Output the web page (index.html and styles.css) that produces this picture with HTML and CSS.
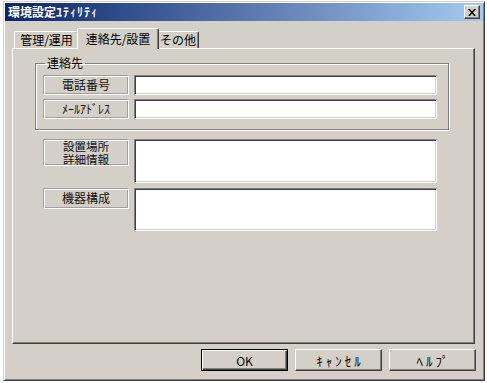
FILE: index.html
```html
<!DOCTYPE html>
<html lang="ja">
<head>
    <meta charset="UTF-8">
    <title>環境設定ﾕﾃｨﾘﾃｨ</title>
    <link rel="stylesheet" href="styles.css">
</head>
<body>
    <div class="window">
        <div class="titlebar">
            <span class="title">環境設定<span class="kana">ﾕﾃｨﾘﾃｨ</span></span>
            <span class="close">
                <svg width="8" height="7" viewBox="0 0 8 7"><path d="M0 0h2l2 2.5 2-2.5h2L5 3.5 8 7H6L4 4.5 2 7H0l3-3.5z" fill="#000"/></svg>
            </span>
        </div>
        <div class="dialog">
            <!-- タブ -->
            <div class="tabs">
                <div class="tab tab-first">管理/運用</div>
                <div class="tab active">連絡先/設置</div>
                <div class="tab tab-last">その他</div>
            </div>
            <div class="panel">
                <fieldset class="group">
                    <legend>連絡先</legend>
                    <div class="row">
                        <div class="label">電話番号</div>
                        <div class="field"></div>
                    </div>
                    <div class="row">
                        <div class="label">ﾒｰﾙｱﾄﾞﾚｽ</div>
                        <div class="field"></div>
                    </div>
                </fieldset>
                <div class="row row-place">
                    <div class="label label-two">設置場所<br>詳細情報</div>
                    <div class="field field-place"></div>
                </div>
                <div class="row row-config">
                    <div class="label label-config">機器構成</div>
                    <div class="field field-config"></div>
                </div>
            </div>
            <!-- ボタン -->
            <div class="buttons">
                <button class="btn default">OK</button>
                <button class="btn kana-btn">ｷｬﾝｾﾙ</button>
                <button class="btn kana-btn">ﾍﾙﾌﾟ</button>
            </div>
        </div>
    </div>
</body>
</html>
```

FILE: styles.css
```css
* {
    box-sizing: border-box;
}
body {
    margin: 0;
    padding: 1px 0 0 3px;
    background-color: #fff;
    font-family: "Noto Sans CJK JP", "Liberation Sans", sans-serif;
    font-size: 12px;
    color: #000;
}
.window {
    width: 482px;
    height: 380px;
    padding: 1px;
    background-color: #d4d0c8;
    border: 1px solid;
    border-color: #d4d0c8 #404040 #404040 #d4d0c8;
    box-shadow: inset 1px 1px #fff, inset -1px -1px #808080;
}
.titlebar {
    height: 18px;
    display: flex;
    align-items: center;
    justify-content: space-between;
    background: linear-gradient(to right, #0a246a, #a6caf0);
    padding: 0 3px 0 3px;
}
.title {
    color: #fff;
    font-weight: bold;
    font-size: 12px;
    line-height: 18px;
}
.title .kana {
    letter-spacing: 1px;
}
.close {
    width: 16px;
    height: 14px;
    display: flex;
    align-items: center;
    justify-content: center;
    background-color: #d4d0c8;
    border: 1px solid;
    border-color: #fff #404040 #404040 #fff;
    box-shadow: inset -1px -1px #808080;
}
.dialog {
    padding: 7px 8px 0 7px;
}
.tabs {
    display: flex;
    align-items: flex-end;
    height: 20px;
    padding-left: 2px;
    position: relative;
    z-index: 1;
}
.tab {
    height: 17px;
    line-height: 16px;
    text-align: center;
    white-space: nowrap;
    background-color: #d4d0c8;
    border: 1px solid;
    border-bottom: none;
    border-color: #fff #404040 #404040 #fff;
    border-radius: 2px 2px 0 0;
    box-shadow: inset -1px 0 #808080;
}
.tab-first {
    width: 65px;
}
.tab-last {
    width: 42px;
}
.tab.active {
    width: 82px;
    height: 21px;
    line-height: 19px;
    margin: 0 -2px -1px -2px;
    position: relative;
    z-index: 2;
}
.panel {
    height: 296px;
    border: 1px solid;
    border-color: #fff #404040 #404040 #fff;
    box-shadow: inset -1px -1px #808080;
}
.group {
    width: 414px;
    margin: 7px 0 0 22px;
    padding: 5px 11px 10px 7px;
    border: 1px solid #808080;
    box-shadow: inset 1px 1px #fff, 1px 1px #fff;
}
.group legend {
    padding: 0 2px;
    margin-left: 2px;
    line-height: 14px;
}
.row {
    display: flex;
    gap: 5px;
    margin-bottom: 4px;
}
.group .row:last-of-type {
    margin-bottom: 0;
}
.label {
    width: 86px;
    height: 20px;
    line-height: 18px;
    text-align: center;
    color: #111;
    border: 1px solid;
    border-color: #a0a0a0 #fff #fff #a0a0a0;
    box-shadow: inset 1px 1px #fff, inset -1px -1px #a0a0a0;
}
.label-two {
    height: 27px;
    font-size: 11.5px;
    line-height: 12.5px;
}
.label-config {
    height: 21px;
}
.field {
    width: 303px;
    height: 20px;
    background-color: #fff;
    border: 1px solid;
    border-color: #808080 #fff #fff #808080;
    box-shadow: inset 1px 1px #404040, inset -1px -1px #d4d0c8;
}
.row-place {
    margin: 9px 0 0 30px;
}
.field-place {
    height: 44px;
}
.row-config {
    margin: 5px 0 0 30px;
}
.field-config {
    height: 43px;
}
.buttons {
    display: flex;
    justify-content: flex-end;
    gap: 7px;
    margin-top: 5px;
    margin-right: -1px;
}
.btn {
    width: 87px;
    height: 22px;
    padding: 0;
    font-family: inherit;
    font-size: 12px;
    color: #000;
    background-color: #d4d0c8;
    border: 1px solid;
    border-color: #fff #404040 #404040 #fff;
    box-shadow: inset -1px -1px #808080;
}
.btn.kana-btn {
    font-size: 13px;
    letter-spacing: 3px;
    text-indent: 3px;
}
.btn.default {
    border-color: #000;
    box-shadow: inset 1px 1px #fff, inset -1px -1px #404040, inset -2px -2px #808080;
}
```
